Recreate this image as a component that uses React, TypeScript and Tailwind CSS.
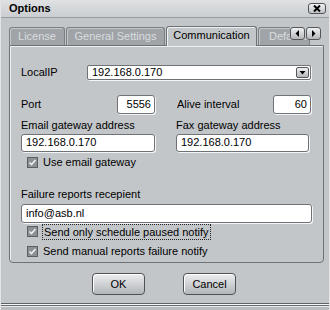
import React from "react";

function Check() {
  return (
    <svg width="11" height="11" viewBox="0 0 11 11" className="shrink-0">
      <rect x="0.5" y="0.5" width="10" height="10" fill="#8d9093" stroke="#5c5f62" />
      <path d="M2.5 5.5 L4.5 7.5 L8.5 3" fill="none" stroke="#eceeef" strokeWidth="1.6" />
    </svg>
  );
}

function Field({ value, className }: { value: string; className: string }) {
  return (
    <div
      className={`bg-white border border-[#6f7276] rounded-[3px] shadow-[1px_1px_0_#f4f5f6] flex items-center px-[4px] ${className}`}
    >
      {value}
    </div>
  );
}

function SmallButton({ dir }: { dir: "left" | "right" | "down" }) {
  const pts = dir === "left" ? "6,2 6,9 2.5,5.5" : dir === "right" ? "3,2 3,9 6.5,5.5" : "1.5,3 7.5,3 4.5,6";
  return (
    <div className="w-[15px] h-[13px] rounded-[3px] border border-[#55585b] bg-gradient-to-b from-[#f0f1f2] to-[#b4b7ba] flex items-center justify-center">
      <svg width="9" height="11" viewBox="0 0 9 11">
        <polygon points={pts} fill="#000" />
      </svg>
    </div>
  );
}

export default function App() {
  return (
    <div className="w-[330px] h-[310px] bg-[#c3c6c9] flex flex-col font-['Liberation_Sans',Arial,sans-serif] text-[11px] text-black border-x border-[#e2e4e6] relative overflow-hidden">

      {/* TITLE BAR */}
      <div className="h-[18px] shrink-0 flex items-center justify-between pl-[8px] pr-[3px] bg-gradient-to-b from-[#dfe1e3] to-[#cbced1] border-b border-[#9a9da0]">
        <span className="font-bold text-[11px] leading-none">Options</span>
        <div className="w-[18px] h-[11px] rounded-[3px] border border-[#4f5256] bg-gradient-to-b from-[#f2f3f4] to-[#bfc2c5] flex items-center justify-center">
          <svg width="8" height="7" viewBox="0 0 8 7">
            <path d="M1 0.5 L7 6.5 M7 0.5 L1 6.5" stroke="#000" strokeWidth="2" />
          </svg>
        </div>
      </div>

      {/* TABS */}
      <div className="relative flex items-end ml-[8px] mt-[8px] h-[19px] gap-[1px]">
        <div className="w-[56px] h-[18px] rounded-t-[3px] border border-b-0 border-[#7b7f83] bg-[#a0a4a8] text-[#dadddf] flex items-center justify-center shadow-[inset_1px_1px_0_#c4c7ca]">
          License
        </div>
        <div className="w-[99px] h-[18px] rounded-t-[3px] border border-b-0 border-[#7b7f83] bg-[#a0a4a8] text-[#dadddf] flex items-center justify-center shadow-[inset_1px_1px_0_#c4c7ca]">
          General Settings
        </div>
        <div className="w-[91px] h-[20px] mb-[-1px] relative z-10 rounded-t-[3px] border border-b-0 border-[#6e7276] bg-[#c3c6c9] flex items-center justify-center pb-[2px] shadow-[inset_1px_1px_0_#eef0f1]">
          Communication
        </div>
        <div className="w-[52px] h-[18px] rounded-t-[3px] border border-b-0 border-[#7b7f83] bg-[#a0a4a8] text-[#dadddf] flex items-center pl-[10px] shadow-[inset_1px_1px_0_#c4c7ca]">
          Default
        </div>
        <div className="absolute left-[281px] top-[1px] flex gap-[1px] bg-[#c3c6c9] z-20">
          <SmallButton dir="left" />
          <SmallButton dir="right" />
        </div>
      </div>

      {/* PANEL */}
      <div className="ml-[8px] w-[315px] h-[218px] shrink-0 border border-[#6e7276] rounded-b-[4px] shadow-[inset_1px_1px_0_#eef0f1] pl-[11px] flex flex-col">

        <div className="flex items-center mt-[18px]">
          <span className="w-[66px]">LocalIP</span>
          <div className="w-[224px] h-[15px] bg-white border border-[#6f7276] rounded-[2px] shadow-[1px_1px_0_#f4f5f6] flex items-center justify-between pl-[4px] pr-[1px]">
            <span>192.168.0.170</span>
            <div className="w-[13px] h-[11px] rounded-[2px] border border-[#55585b] bg-gradient-to-b from-[#f0f1f2] to-[#b4b7ba] flex items-center justify-center">
              <svg width="9" height="9" viewBox="0 0 9 9">
                <polygon points="1.5,3 7.5,3 4.5,6.5" fill="#000" />
              </svg>
            </div>
          </div>
        </div>

        <div className="flex items-center mt-[14px]">
          <span className="w-[96px]">Port</span>
          <Field value="5556" className="w-[38px] h-[19px] justify-end !px-[3px]" />
          <span className="w-[96px] ml-[22px]">Alive interval</span>
          <Field value="60" className="w-[38px] h-[19px] justify-end !px-[3px]" />
        </div>

        <div className="flex gap-[21px] mt-[5px]">
          <div className="flex flex-col w-[134px]">
            <span className="leading-[13px]">Email gateway address</span>
            <Field value="192.168.0.170" className="mt-[2px] h-[18px]" />
          </div>
          <div className="flex flex-col w-[133px]">
            <span className="leading-[13px]">Fax gateway address</span>
            <Field value="192.168.0.170" className="mt-[2px] h-[18px]" />
          </div>
        </div>

        <div className="flex items-center gap-[5px] ml-[6px] mt-[4px] h-[13px]">
          <Check />
          <span>Use email gateway</span>
        </div>

        <span className="leading-[13px] mt-[19px]">Failure reports recepient</span>
        <Field value="info@asb.nl" className="mt-[3px] w-[291px] h-[19px]" />

        <div className="flex items-center gap-[4px] ml-[6px] mt-[1px] h-[16px]">
          <Check />
          <span className="border border-dotted border-[#222] px-[1px] leading-[14px]">Send only schedule paused notify</span>
        </div>

        <div className="flex items-center gap-[5px] ml-[6px] mt-[5px] h-[13px]">
          <Check />
          <span>Send manual reports failure notify</span>
        </div>
      </div>

      {/* BUTTONS */}
      <div className="flex gap-[38px] pl-[91px] mt-[10px]">
        <button className="w-[53px] h-[22px] rounded-[4px] border border-[#4f5256] bg-gradient-to-b from-[#eceef0] to-[#b3b6b9] shadow-[inset_1px_1px_0_#fff]">
          OK
        </button>
        <button className="w-[53px] h-[22px] rounded-[4px] border border-[#4f5256] bg-gradient-to-b from-[#eceef0] to-[#b3b6b9] shadow-[inset_1px_1px_0_#fff]">
          Cancel
        </button>
      </div>

      {/* FRAME BOTTOM */}
      <div className="flex-1" />
      <div className="h-[1px] bg-[#5f6266]" />
      <div className="h-[1px] bg-[#f4f5f6]" />
      <div className="h-[1px] bg-[#6a6d70]" />
      <div className="h-[1px] bg-[#e6e8e9]" />
      <div className="h-[3px] bg-[#b9bcbf]" />
    </div>
  );
}
